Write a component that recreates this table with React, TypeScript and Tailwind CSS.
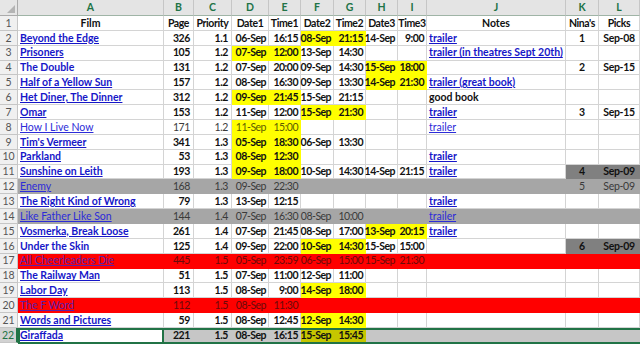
type Row = {
  c: string[];
  fill?: "red" | "gray" | "sel";
  y?: number[];
  kl?: "dark" | "gray";
  link?: boolean;
  note?: boolean;
  light?: boolean;
};

const COLS = ["A", "B", "C", "D", "E", "F", "G", "H", "I", "J", "K", "L"];

// align per column: film left, numbers right, notes left, nina/picks centre
const ALIGN = [
  "justify-start pl-[2px]",
  "justify-end pr-[3px] tracking-[-0.4px]",
  "justify-end pr-[3px] tracking-[-0.4px]",
  "justify-end pr-[2px] tracking-[-0.5px]",
  "justify-end pr-[2px] tracking-[-0.5px]",
  "justify-end pr-[2px] tracking-[-0.5px]",
  "justify-end pr-[2px] tracking-[-0.5px]",
  "justify-end pr-[2px] tracking-[-0.5px]",
  "justify-end pr-[2px] tracking-[-0.5px]",
  "justify-start pl-[2px]",
  "justify-center",
  "justify-center tracking-[-0.3px]",
];

const rows: Row[] = [
  { c: ["Beyond the Edge", "326", "1.1", "06-Sep", "16:15", "08-Sep", "21:15", "14-Sep", "9:00", "trailer", "1", "Sep-08"], y: [5, 6], link: true, note: true },
  { c: ["Prisoners", "105", "1.2", "07-Sep", "12:00", "13-Sep", "14:30", "", "", "trailer (in theatres Sept 20th)", "", ""], y: [3, 4], link: true, note: true },
  { c: ["The Double", "131", "1.2", "07-Sep", "20:00", "09-Sep", "14:30", "15-Sep", "18:00", "", "2", "Sep-15"], y: [7, 8] },
  { c: ["Half of a Yellow Sun", "157", "1.2", "08-Sep", "16:30", "09-Sep", "13:30", "14-Sep", "21:30", "trailer (great book)", "", ""], y: [7, 8], link: true, note: true },
  { c: ["Het Diner, The Dinner", "312", "1.2", "09-Sep", "21:45", "15-Sep", "21:15", "", "", "good book", "", ""], y: [3, 4], link: true },
  { c: ["Omar", "153", "1.2", "11-Sep", "12:00", "15-Sep", "21:30", "", "", "trailer", "3", "Sep-15"], y: [5, 6], link: true, note: true },
  { c: ["How I Live Now", "171", "1.2", "11-Sep", "15:00", "", "", "", "", "trailer", "", ""], y: [3, 4], link: true, note: true, light: true },
  { c: ["Tim's Vermeer", "341", "1.3", "05-Sep", "18:30", "06-Sep", "13:30", "", "", "", "", ""], y: [3, 4], link: true },
  { c: ["Parkland", "53", "1.3", "08-Sep", "12:30", "", "", "", "", "trailer", "", ""], y: [3, 4], link: true, note: true },
  { c: ["Sunshine on Leith", "193", "1.3", "09-Sep", "18:00", "10-Sep", "14:30", "14-Sep", "21:15", "trailer", "4", "Sep-09"], y: [3, 4], link: true, note: true, kl: "dark" },
  { c: ["Enemy", "168", "1.3", "09-Sep", "22:30", "", "", "", "", "", "5", "Sep-09"], fill: "gray", link: true, light: true },
  { c: ["The Right Kind of Wrong", "79", "1.3", "13-Sep", "12:15", "", "", "", "", "trailer", "", ""], link: true, note: true },
  { c: ["Like Father Like Son", "144", "1.4", "07-Sep", "16:30", "08-Sep", "10:00", "", "", "trailer", "", ""], fill: "gray", link: true, note: true, light: true },
  { c: ["Vosmerka, Break Loose", "261", "1.4", "07-Sep", "21:45", "08-Sep", "17:00", "13-Sep", "20:15", "trailer", "", ""], y: [7, 8], link: true, note: true },
  { c: ["Under the Skin", "125", "1.4", "09-Sep", "22:00", "10-Sep", "14:30", "15-Sep", "15:00", "", "6", "Sep-09"], y: [5, 6], kl: "dark" },
  { c: ["All Cheerleaders Die", "445", "1.5", "05-Sep", "23:59", "06-Sep", "15:00", "15-Sep", "21:30", "", "", ""], fill: "red", link: true, light: true },
  { c: ["The Railway Man", "51", "1.5", "07-Sep", "11:00", "12-Sep", "11:00", "", "", "", "", ""], link: true },
  { c: ["Labor Day", "113", "1.5", "08-Sep", "9:00", "14-Sep", "18:00", "", "", "", "", ""], y: [5, 6], link: true },
  { c: ["The F Word", "112", "1.5", "08-Sep", "11:30", "", "", "", "", "", "", ""], fill: "red", link: true, light: true },
  { c: ["Words and Pictures", "59", "1.5", "08-Sep", "12:45", "12-Sep", "14:30", "", "", "", "", ""], y: [5, 6], link: true },
  { c: ["Giraffada", "221", "1.5", "08-Sep", "16:15", "15-Sep", "15:45", "", "", "", "", ""], y: [5, 6], link: true, fill: "sel" },
];

function cellBg(r: Row, i: number) {
  if (r.fill === "sel") {
    if (i === 0) return "bg-white border-transparent";
    if (r.y?.includes(i)) return "bg-[#c6c600] border-transparent";
    return "bg-[#c6c6c6] border-transparent";
  }
  if (r.fill === "red") return "bg-[#ff0000] border-transparent";
  if (r.kl && i >= 10) return r.kl === "dark" ? "bg-[#808080] border-transparent" : "bg-[#a6a6a6] border-transparent";
  if (r.fill === "gray") return "bg-[#a6a6a6] border-transparent";
  if (r.y?.includes(i)) return "bg-[#ffff00] border-transparent";
  return "bg-white border-[#d4d4d4]";
}

function cellText(r: Row, i: number) {
  const isLink = (i === 0 && r.link) || (i === 9 && r.note);
  if (r.fill === "red") {
    if (isLink) return "text-[#5b1fa8] underline font-normal";
    return "text-[#6a0a0a] font-normal";
  }
  if (i === 0) {
    if (r.light) return "text-[#2c2cd8] underline font-normal";
    return r.link ? "text-[#1616c8] underline" : "text-[#1616c8]";
  }
  if (i === 9 && r.note) return r.light ? "text-[#2c2cd8] underline font-normal" : "text-[#1616c8] underline";
  if (r.light) return r.y?.includes(i) ? "text-[#5c5c00] font-normal" : "text-[#3a3a3a] font-normal";
  return "text-[#111]";
}

export default function App() {
  return (
    <div
      className="w-[640px] h-[347px] overflow-hidden bg-white text-[10.5px] font-bold leading-none"
      style={{ fontFamily: "Lato, 'Open Sans', sans-serif" }}
    >
      <div className="relative grid grid-cols-[18px_146px_30px_38px_37px_32px_33px_32px_32px_29px_139px_33px_41px] grid-rows-[16px_repeat(22,14.86px)]">
        {/* corner */}
        <div className="flex items-end justify-end bg-[#e6e6e6] border-r border-b border-[#ababab] pr-[2px] pb-[2px]">
          <svg width="8" height="8" viewBox="0 0 8 8">
            <polygon points="8,0 8,8 0,8" fill="#b4b4b4" />
          </svg>
        </div>
        {COLS.map((c) => (
          <div
            key={c}
            className="flex items-center justify-center bg-[#e4e4e4] border-r border-b border-r-[#c6c6c6] border-b-[#9fb4a6] text-[#217346] text-[10.5px]"
          >
            {c}
          </div>
        ))}

        {/* row 1 headings */}
        <div className="flex items-center justify-center bg-[#f0f0f0] border-r border-b border-[#c6c6c6] text-[#555] font-normal">1</div>
        {["Film", "Page", "Priority", "Date1", "Time1", "Date2", "Time2", "Date3", "Time3", "Notes", "Nina's", "Picks"].map((h, i) => (
          <div
            key={h}
            className={`flex items-center justify-center bg-white border-r border-b border-[#d4d4d4] text-[#111] whitespace-nowrap overflow-hidden ${i > 0 && i !== 9 ? "tracking-[-0.4px]" : ""}`}
          >
            {h}
          </div>
        ))}

        {rows.map((r, ri) => {
          const sel = r.fill === "sel";
          return [
            <div
              key={`h${ri}`}
              className={
                sel
                  ? "flex items-center justify-center bg-[#d2d2d2] border-r-2 border-b border-r-[#217346] border-b-[#c6c6c6] text-[#217346] font-normal"
                  : "flex items-center justify-center bg-[#f0f0f0] border-r border-b border-[#c6c6c6] text-[#555] font-normal"
              }
            >
              {ri + 2}
            </div>,
            ...r.c.map((v, i) => (
              <div
                key={`${ri}-${i}`}
                className={`flex items-center whitespace-nowrap border-r border-b ${cellBg(r, i)} ${ALIGN[i]} ${cellText(r, i)}`}
              >
                {v}
              </div>
            )),
          ];
        })}

        {/* selection outline around row 22 */}
        <div className="absolute left-[18px] right-0 bottom-[-1px] h-[16px] border-t-2 border-b-2 border-[#217346] pointer-events-none" />
        <div className="absolute left-[18px] w-[146px] bottom-[-1px] h-[16px] border-2 border-[#217346] pointer-events-none" />
      </div>
    </div>
  );
}
